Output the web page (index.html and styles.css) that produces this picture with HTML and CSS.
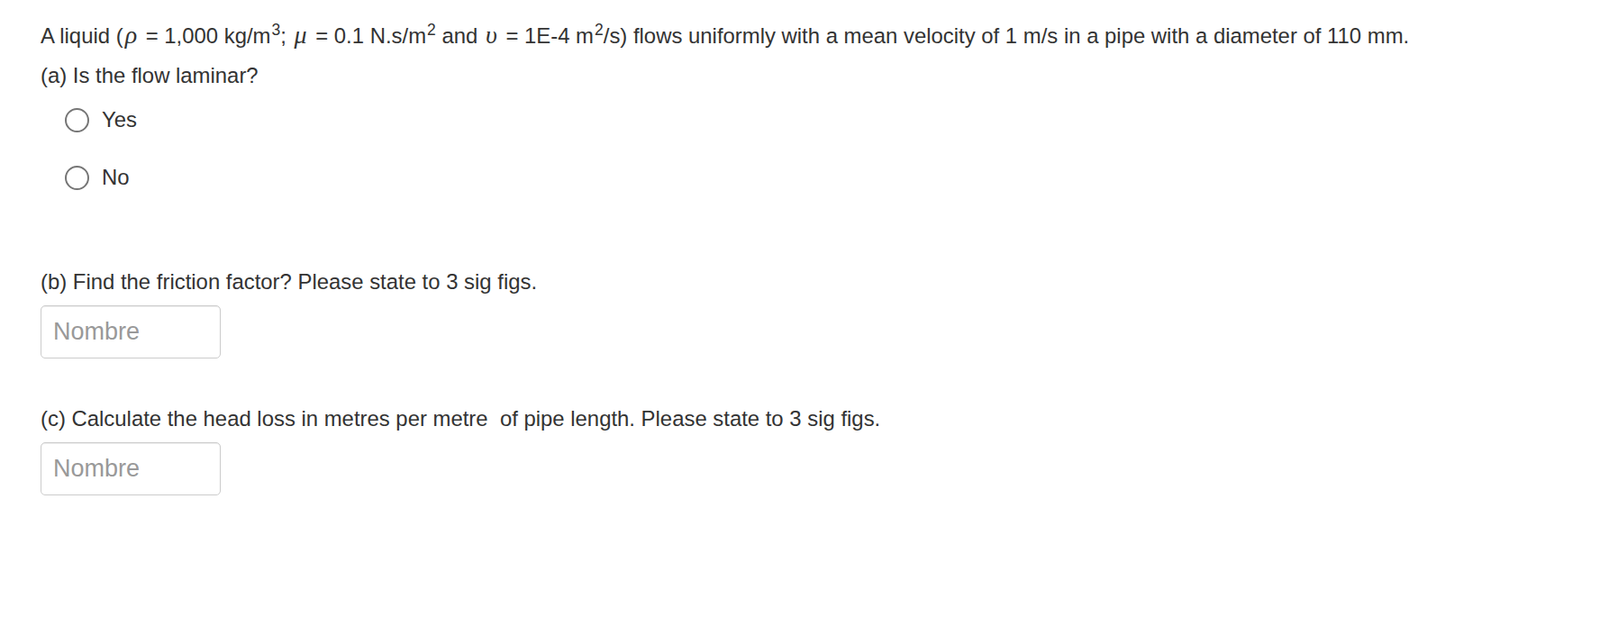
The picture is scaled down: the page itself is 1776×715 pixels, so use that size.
FILE: index.html
```html
<!DOCTYPE html>
<html>
<head>
<meta charset="utf-8">
<link rel="stylesheet" href="styles.css">
</head>
<body>
<div class="question">
  <p class="text">A liquid (<span class="math">ρ</span> = 1,000 kg/m<sup>3</sup>; <span class="math">μ</span> = 0.1 N.s/m<sup>2</sup> and <span class="math">υ</span> = 1E-4 m<sup>2</sup>/s) flows uniformly with a mean velocity of 1 m/s in a pipe with a diameter of 110 mm.</p>
  <p class="text">(a) Is the flow laminar?</p>
  <div class="choices">
    <label class="choice"><span class="radio"></span><span class="label">Yes</span></label>
    <label class="choice"><span class="radio"></span><span class="label">No</span></label>
  </div>
  <p class="text part-b">(b) Find the friction factor? Please state to 3 sig figs.</p>
  <div class="field"><input class="num" type="text" placeholder="Nombre"></div>
  <p class="text part-c">(c) Calculate the head loss in metres per metre &nbsp;of pipe length. Please state to 3 sig figs.</p>
  <div class="field"><input class="num" type="text" placeholder="Nombre"></div>
</div>
</body>
</html>
```
FILE: styles.css
```css
html, body {
  margin: 0;
  padding: 0;
  background: #ffffff;
}
body {
  font-family: "Liberation Sans", Arial, sans-serif;
  color: #333333;
}
.question {
  padding: 22px 0 0 45px;
}
.text {
  margin: 0 0 10px 0;
  font-size: 23.9px;
  line-height: 34px;
  white-space: nowrap;
}
.text sup {
  font-size: 17.5px;
  line-height: 0;
  vertical-align: 0.5em;
  padding-left: 1px;
}
.math {
  font-family: "Liberation Serif", "Times New Roman", serif;
  font-style: italic;
  font-size: 28px;
  margin: 0 3px 0 2px;
}
.choices {
  display: flex;
  flex-direction: column;
  gap: 20px;
  margin-top: 7px;
  padding-left: 27px;
}
.choice {
  display: flex;
  align-items: center;
  height: 44px;
  gap: 14px;
  font-size: 23.9px;
}
.radio {
  width: 23px;
  height: 23px;
  border: 2px solid #767676;
  border-radius: 50%;
  box-sizing: content-box;
}
.part-b {
  margin-top: 77px;
  margin-bottom: 9px;
}
.part-c {
  margin-top: 50px;
  margin-bottom: 9px;
}
.field {
  margin: 0;
}
.num {
  display: block;
  box-sizing: border-box;
  width: 200px;
  height: 59px;
  margin: 0;
  padding: 0 13px;
  border: 1px solid #cccccc;
  border-radius: 5px;
  box-shadow: inset 0 1px 1px rgba(0,0,0,0.075);
  font-family: "Liberation Sans", Arial, sans-serif;
  font-size: 27px;
  color: #555555;
  background: #ffffff;
  outline: none;
}
.num::placeholder {
  color: #999999;
}
```
